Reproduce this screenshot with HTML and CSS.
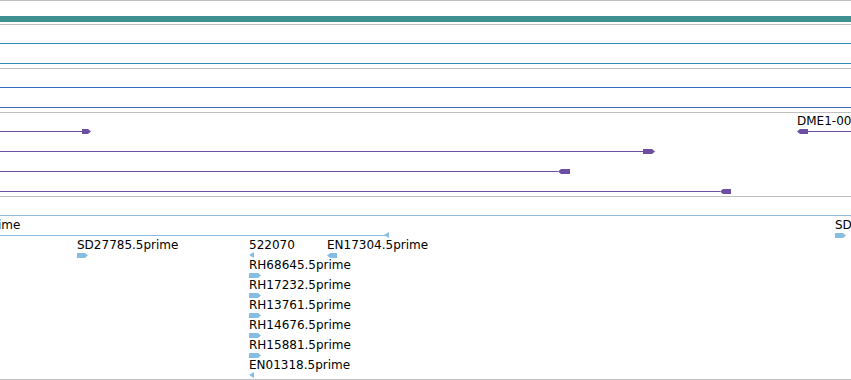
FILE: index.html
```html
<!DOCTYPE html>
<html lang="en">
<head>
  <meta charset="UTF-8">
  <title>Track view</title>
  <link rel="stylesheet" href="styles.css">
</head>
<body>
  <div class="view">
    <!-- coverage bar -->
    <div class="track">
      <div class="row"><div class="bar"></div></div>
    </div>

    <!-- transcripts -->
    <div class="track">
      <div class="row"><div class="line full teal"></div></div>
      <div class="row"><div class="line full teal"></div></div>
    </div>

    <div class="track">
      <div class="row"><div class="line full blue"></div></div>
      <div class="row"><div class="line full blue"></div></div>
    </div>

    <!-- gene models -->
    <div class="track">
      <div class="row">
        <div class="line purple" style="left:0;width:82px"></div>
        <svg class="arrow purple" style="left:82px;width:9px" viewBox="0 0 9 5" preserveAspectRatio="none"><polygon points="0,0 6,0 9,2.5 6,5 0,5"/></svg>
        <span class="label" style="left:797px">DME1-0012876</span>
        <svg class="arrow purple" style="left:797px;width:11px" viewBox="0 0 11 5" preserveAspectRatio="none"><polygon points="0,2.5 3,0 11,0 11,5 3,5"/></svg>
        <div class="line purple" style="left:808px;right:0"></div>
      </div>
      <div class="row">
        <div class="line purple" style="left:0;width:643px"></div>
        <svg class="arrow purple" style="left:643px;width:12px" viewBox="0 0 12 5" preserveAspectRatio="none"><polygon points="0,0 9,0 12,2.5 9,5 0,5"/></svg>
      </div>
      <div class="row">
        <div class="line purple" style="left:0;width:558px"></div>
        <svg class="arrow purple" style="left:558px;width:12px" viewBox="0 0 12 5" preserveAspectRatio="none"><polygon points="0,2.5 3,0 12,0 12,5 3,5"/></svg>
      </div>
      <div class="row">
        <div class="line purple" style="left:0;width:720px"></div>
        <svg class="arrow purple" style="left:720px;width:11px" viewBox="0 0 11 5" preserveAspectRatio="none"><polygon points="0,2.5 3,0 11,0 11,5 3,5"/></svg>
      </div>
    </div>

    <!-- ESTs -->
    <div class="track track-last">
      <div class="row"><div class="line full light"></div></div>
      <div class="row">
        <span class="label" style="left:-81px">SD07957.5prime</span>
        <div class="line light" style="left:0;width:385px"></div>
        <svg class="tri light" style="left:384px" viewBox="0 0 5 6"><polygon points="0,3 5,0 5,6"/></svg>
        <span class="label" style="left:835px">SD21830.5prime</span>
        <svg class="arrow light" style="left:835px;width:11px" viewBox="0 0 11 5" preserveAspectRatio="none"><polygon points="0,0 8,0 11,2.5 8,5 0,5"/></svg>
      </div>
      <div class="row">
        <span class="label" style="left:77px">SD27785.5prime</span>
        <svg class="arrow light" style="left:77px;width:11px" viewBox="0 0 11 5" preserveAspectRatio="none"><polygon points="0,0 8,0 11,2.5 8,5 0,5"/></svg>
        <span class="label" style="left:249px">522070</span>
        <svg class="tri light" style="left:249px" viewBox="0 0 5 6"><polygon points="0,3 5,0 5,6"/></svg>
        <span class="label" style="left:327px">EN17304.5prime</span>
        <svg class="arrow light" style="left:327px;width:10px" viewBox="0 0 10 5" preserveAspectRatio="none"><polygon points="0,2.5 3,0 10,0 10,5 3,5"/></svg>
      </div>
      <div class="row">
        <span class="label" style="left:249px">RH68645.5prime</span>
        <svg class="arrow light" style="left:249px;width:12px" viewBox="0 0 12 5" preserveAspectRatio="none"><polygon points="0,0 9,0 12,2.5 9,5 0,5"/></svg>
      </div>
      <div class="row">
        <span class="label" style="left:249px">RH17232.5prime</span>
        <svg class="arrow light" style="left:249px;width:12px" viewBox="0 0 12 5" preserveAspectRatio="none"><polygon points="0,0 9,0 12,2.5 9,5 0,5"/></svg>
      </div>
      <div class="row">
        <span class="label" style="left:249px">RH13761.5prime</span>
        <svg class="arrow light" style="left:249px;width:12px" viewBox="0 0 12 5" preserveAspectRatio="none"><polygon points="0,0 9,0 12,2.5 9,5 0,5"/></svg>
      </div>
      <div class="row">
        <span class="label" style="left:249px">RH14676.5prime</span>
        <svg class="arrow light" style="left:249px;width:12px" viewBox="0 0 12 5" preserveAspectRatio="none"><polygon points="0,0 9,0 12,2.5 9,5 0,5"/></svg>
      </div>
      <div class="row">
        <span class="label" style="left:249px">RH15881.5prime</span>
        <svg class="arrow light" style="left:249px;width:12px" viewBox="0 0 12 5" preserveAspectRatio="none"><polygon points="0,0 9,0 12,2.5 9,5 0,5"/></svg>
      </div>
      <div class="row">
        <span class="label" style="left:249px">EN01318.5prime</span>
        <svg class="tri light" style="left:249px" viewBox="0 0 5 6"><polygon points="0,3 5,0 5,6"/></svg>
      </div>
    </div>
  </div>
</body>
</html>
```

FILE: styles.css
```css
/* Track colours */
:root {
  --rule: #c0c0c0;
  --coverage: #3e8f8f;
  --teal: #2b8cab;
  --blue: #3a69b8;
  --purple: #6c4ea2;
  --light: #8bbadb;
  --light-fill: #86bde3;
}

* {
  margin: 0;
  padding: 0;
  box-sizing: border-box;
}

body {
  background: #fff;
  color: #000;
  font-family: "DejaVu Sans", sans-serif;
  font-size: 12px;
  width: 851px;
  height: 380px;
  overflow: hidden;
}

.view {
  display: flex;
  flex-direction: column;
}

/* each track: rule on top, rows of 20px */
.track {
  position: relative;
  overflow: hidden;
  border-top: 1px solid var(--rule);
  padding-bottom: 3px;
}
.track-last {
  padding-bottom: 2px;
  border-bottom: 1px solid var(--rule);
}

.row {
  position: relative;
  height: 20px;
}

.bar {
  position: absolute;
  top: 15px;
  left: 0;
  right: 0;
  height: 6px;
  background: var(--coverage);
}

.line {
  position: absolute;
  top: 18px;
  height: 1px;
}
.line.full {
  left: 0;
  right: 0;
}
.line.teal { background: var(--teal); }
.line.blue { background: var(--blue); }
.line.purple { background: var(--purple); }
.line.light { background: var(--light); }

.label {
  position: absolute;
  top: 1px;
  line-height: 14px;
  white-space: nowrap;
}

/* strand glyphs */
.arrow {
  position: absolute;
  top: 16px;
  height: 5px;
}
.tri {
  position: absolute;
  top: 15px;
  width: 5px;
  height: 6px;
}
svg.purple { fill: var(--purple); }
svg.light { fill: var(--light-fill); }
```
